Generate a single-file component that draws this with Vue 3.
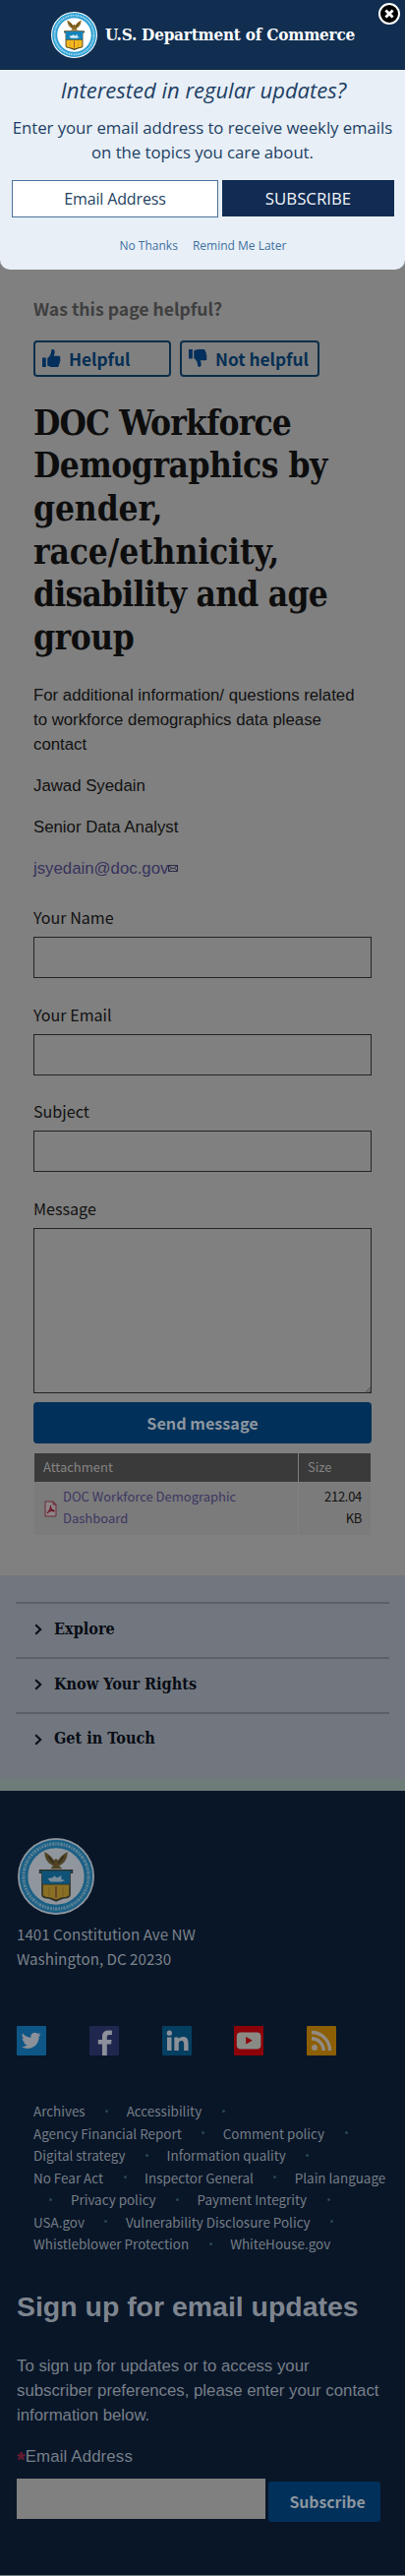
<script setup>
const headingLines = [
  { text: 'DOC Workforce', fit: 'fit-a' },
  { text: 'Demographics by', fit: 'fit-b' },
  { text: 'gender,', fit: 'fit-c' },
  { text: 'race/ethnicity,', fit: 'fit-c' },
  { text: 'disability and age', fit: 'fit-d' },
  { text: 'group', fit: 'fit-b' },
]
const fields = ['Your Name', 'Your Email', 'Subject']
const sections = ['Explore', 'Know Your Rights', 'Get in Touch']
const linkRows = [
  { items: ['Archives', 'Accessibility'], trail: true },
  { items: ['Agency Financial Report', 'Comment policy'], trail: true },
  { items: ['Digital strategy', 'Information quality'], trail: true },
  { items: ['No Fear Act', 'Inspector General', 'Plain language'] },
  { items: ['Privacy policy', 'Payment Integrity'], lead: true, trail: true },
  { items: ['USA.gov', 'Vulnerability Disclosure Policy'], trail: true },
  { items: ['Whistleblower Protection', 'WhiteHouse.gov'] },
]
const thumb = 'M0 9h4v10H0z M5.5 9.5 C8 8 9.5 5 9.6 2 C9.7 .2 10.4 0 11.2 0 C13.2 0 13.8 2.2 13.2 4.2 L12.4 7 H17.4 C19.6 7 20 9.3 18.9 10.3 C19.8 11.2 19.7 12.6 18.6 13.3 C19.2 14.4 18.8 15.5 17.9 16 C18.2 17.7 17.4 19 15.4 19 H11 C8.5 19 7.3 18 5.5 17.6 Z'
</script>

<template>
  <div class="page">
    <svg class="defs" width="0" height="0" aria-hidden="true">
      <symbol id="seal" viewBox="0 0 100 100">
        <circle cx="50" cy="50" r="50" fill="#fff" />
        <circle cx="50" cy="50" r="42.2" fill="none" stroke="#2b9ed2" stroke-width="11" />
        <circle cx="50" cy="50" r="42.4" fill="none" stroke="#a5dbf0" stroke-width="4" stroke-dasharray="3 1.2 1.6 1.2 2.4 1.4" />
        <path d="M35 18 C41 21 45 25 47 29 L50 27 L53 29 C55 25 59 21 65 18 C65 28 60 34 54 36 L58 40 H43 L46 36 C40 33 35 28 35 18Z" fill="#8a6a24" />
        <path d="M40 24 L47 33 M60 24 L53 33" stroke="#4a3612" stroke-width="1.6" />
        <path d="M28 41H72V46H69V73C69 78 64 79 60 79L50 83L40 79C36 79 31 78 31 73V46H28Z" fill="#4d4520" />
        <path d="M30 42.5H70V45.5H68V60H32V45.5H30Z" fill="#1583b9" />
        <path d="M33 61H67V73C67 76 63 77 59 77L50 80L41 77C37 77 33 76 33 73Z" fill="#f2b91f" />
        <path d="M39 53C43 51 46 53 48 49L51 52L57 49V54L62 55L57 57H43Z" fill="#d6eef7" />
        <path d="M49 63H51V78H49Z" fill="#a4572a" />
        <path d="M41 64V76M59 64V76" stroke="#c98a1c" stroke-width="1" />
      </symbol>
    </svg>

    <header class="brand">
      <svg class="brand-seal"><use href="#seal" /></svg>
      <span class="brand-name">U.S. Department of Commerce</span>
      <svg class="close" viewBox="0 0 24 24">
        <circle cx="12" cy="12" r="10" fill="#000" stroke="#fff" stroke-width="2" />
        <path d="M8.4 8.4L15.6 15.6M15.6 8.4L8.4 15.6" stroke="#fff" stroke-width="2.8" />
      </svg>
    </header>

    <section class="modal-wrap">
      <div class="modal">
        <h2 class="modal-title">Interested in regular updates?</h2>
        <p class="modal-copy">Enter your email address to receive weekly emails<br>on the topics you care about.</p>
        <div class="modal-form">
          <div class="modal-input">Email Address</div>
          <button class="modal-submit">SUBSCRIBE</button>
        </div>
        <div class="modal-links"><a>No Thanks</a><a>Remind Me Later</a></div>
      </div>
    </section>

    <main class="main">
      <div class="question">Was this page helpful?</div>
      <div class="votes">
        <button class="vote up">
          <svg class="thumb" viewBox="0 0 20 19"><path :d="thumb" /></svg>Helpful
        </button>
        <button class="vote down">
          <svg class="thumb flip" viewBox="0 0 20 19"><path :d="thumb" /></svg>Not helpful
        </button>
      </div>

      <h1 class="title">
        <span v-for="line in headingLines" :key="line.text" :class="line.fit">{{ line.text }}</span>
      </h1>

      <div class="copy">
        <p>For additional information/ questions related<br>to workforce demographics data please<br>contact</p>
        <p>Jawad Syedain</p>
        <p>Senior Data Analyst</p>
        <p><a class="mail">jsyedain@doc.gov<svg class="envelope" viewBox="0 0 10 7"><path d="M.5 .5H9.5V6.5H.5Z M.5 .5L5 4L9.5 .5 M.5 6.5L3.5 3 M9.5 6.5L6.5 3" fill="none" stroke="#2e2b48" /></svg></a></p>
      </div>

      <div v-for="field in fields" :key="field" class="field">
        <label>{{ field }}</label>
        <div class="box"></div>
      </div>
      <div class="field last">
        <label>Message</label>
        <div class="box area">
          <svg class="grip" viewBox="0 0 6 6"><path d="M1 6L6 1M4 6L6 4" stroke="#444" fill="none" /></svg>
        </div>
      </div>
      <button class="send">Send message</button>

      <div class="files">
        <div class="th">Attachment</div>
        <div class="th">Size</div>
        <div class="td">
          <svg class="pdf" viewBox="0 0 13 17">
            <path d="M1 1H9L12 4V16H1Z" fill="#8d8486" stroke="#6d2a38" />
            <path d="M9 1V4H12" fill="none" stroke="#6d1a2b" />
            <path d="M3 13C6 10 7 8 6.5 5M6.5 7C7 9 8 10.500 10.500 11M4 11.500C6 10.500 8 10 10 10" fill="none" stroke="#6d1a2b" stroke-width="1.300" />
          </svg>
          <a>DOC Workforce Demographic<br>Dashboard</a>
        </div>
        <div class="td size">212.04<br>KB</div>
      </div>
    </main>

    <nav class="more">
      <div v-for="s in sections" :key="s" class="more-item">
        <svg class="chev" viewBox="0 0 8 12"><path d="M1.200 1.200L6.200 6L1.200 10.800" fill="none" stroke="#080c14" stroke-width="2" /></svg>{{ s }}
      </div>
    </nav>
    <div class="strip"></div>

    <footer class="footer">
      <svg class="footer-seal"><use href="#seal" /></svg>
      <address>1401 Constitution Ave NW<br>Washington, DC 20230</address>

      <div class="social">
        <svg viewBox="0 0 30 30"><rect width="30" height="30" rx="1" fill="#0e5685" /><path d="M24.600 8.600C23.800 9 23.100 9.200 22.300 9.300C23.100 8.800 23.700 8 24 7.100C23.200 7.600 22.300 7.900 21.400 8.100A4.050 4.050 0 0 0 14.500 11.800C11.100 11.600 8.100 10 6.100 7.500C5 9.400 5.600 11.800 7.400 12.900C6.700 12.900 6.100 12.700 5.600 12.400C5.600 14.400 7 16.100 8.800 16.400C8.200 16.600 7.600 16.600 7 16.500C7.500 18.100 9 19.300 10.800 19.300C9.100 20.600 7 21.300 4.800 21C12.600 26 22.600 20.800 22.600 11.300V10.700C23.400 10.100 24.100 9.400 24.600 8.600Z" fill="#8c9098" /></svg>
        <svg viewBox="0 0 30 30"><rect width="30" height="30" rx="1" fill="#20274f" /><path d="M13 30V18.500H8.800V14H13V10.800C13 6.600 15.500 4.600 19.300 4.600C21 4.600 22.300 4.700 22.900 4.800V9H20.300C18.200 9 17.800 10 17.800 11.500V14H22.600L22 18.500H17.800V30Z" fill="#8c909a" /></svg>
        <svg viewBox="0 0 30 30"><rect width="30" height="30" rx="1" fill="#043f61" /><circle cx="7.300" cy="7.200" r="2.600" fill="#8c9098" /><path d="M5 11.500H9.500V25H5ZM12.300 11.500H16.500V13.400C17.300 12 18.900 11.100 21 11.100C25.200 11.100 26.600 13.800 26.600 17.700V25H22.100V18.400C22.100 16.500 21.700 15 19.600 15C17.400 15 16.800 16.500 16.800 18.400V25H12.300Z" fill="#8c9098" /></svg>
        <svg viewBox="0 0 30 30"><rect width="30" height="30" rx="1" fill="#8c0209" /><rect x="2.800" y="6.500" width="24.600" height="17" rx="4" fill="#8a8a85" /><path d="M12.200 11V18.500L18.800 14.700Z" fill="#8c0209" /></svg>
        <svg viewBox="0 0 30 30"><rect width="30" height="30" rx="1" fill="#8c5f06" /><circle cx="8" cy="22" r="2.900" fill="#918b83" /><path d="M5 12.800A12.200 12.200 0 0 1 17.200 25M5 6.500A18.500 18.500 0 0 1 23.500 25" fill="none" stroke="#918b83" stroke-width="3.400" /></svg>
      </div>

      <div class="links">
        <div v-for="(row, i) in linkRows" :key="i" class="link-row" :class="{ lead: row.lead }">
          <i v-if="row.lead" class="dot"></i>
          <template v-for="(item, j) in row.items" :key="item">
            <i v-if="j" class="dot"></i>
            <a>{{ item }}</a>
          </template>
          <i v-if="row.trail" class="dot"></i>
        </div>
      </div>

      <h3 class="signup-title">Sign up for email updates</h3>
      <p class="signup-copy">To sign up for updates or to access your<br>subscriber preferences, please enter your contact<br>information below.</p>
      <div class="signup-label"><b>*</b>Email Address</div>
      <div class="signup-form">
        <div class="signup-input"></div>
        <button class="signup-submit">Subscribe</button>
      </div>
    </footer>
    <div class="edge"></div>
  </div>
</template>

<style scoped>
.page {
  --sans: "Noto Sans CJK SC", sans-serif;
  --arial: "Liberation Sans", Arial, sans-serif;
  --open: "Open Sans", "Noto Sans", sans-serif;
  --serif: "DejaVu Serif Condensed", "DejaVu Serif", serif;
  width: 412px;
  height: 2618px;
  overflow: hidden;
  background: #808080;
  color: #111;
  font-family: var(--sans);
}
.page * { box-sizing: border-box; }
h1, h2, h3, p { margin: 0; font-weight: 400; }
svg { display: block; flex: none; }
button { border: 0; padding: 0; margin: 0; white-space: nowrap; }
.defs { position: absolute; }

.brand {
  position: relative;
  height: 71px;
  background: #112e51;
  border-bottom: 1px solid #0d2440;
  display: flex;
  align-items: center;
  padding-left: 51.500px;
  gap: 8.500px;
}
.brand-seal { width: 47px; height: 47px; }
.brand-name {
  color: #fff;
  font: 700 17px/24px var(--serif);
  letter-spacing: -.22px;
  white-space: nowrap;
}
.close { position: absolute; width: 24px; height: 24px; left: 384px; top: 2px; }

.modal-wrap { height: 203px; background: #808080; }
.modal {
  height: 203px;
  background: #e8eff7;
  border-radius: 0 0 10px 10px;
  color: #1d3f63;
  font-family: var(--open);
  padding: 5px 11px 0 12px;
  text-align: center;
}
.modal-title { font-size: 22px; line-height: 30px; font-style: italic; margin-left: 1px; white-space: nowrap; }
.modal-copy { font-size: 16.800px; line-height: 25.200px; letter-spacing: -.05px; margin-top: 11px; margin-left: -1px; white-space: nowrap; }
.modal-form { display: flex; gap: 4px; margin-top: 15.600px; }
.modal-input {
  width: 210px; height: 38px;
  border: 1px solid #4a7198;
  background: #fff;
  font-size: 16px; line-height: 37px; letter-spacing: -.15px;
  color: #24425f;
}
.modal-submit {
  width: 175px; height: 37px;
  background: #112b52;
  color: #f2f5f9;
  font: 400 16.800px/37px var(--open);
}
.modal-links { display: flex; justify-content: center; gap: 15px; margin-top: 20px; font-size: 12px; line-height: 17px; color: #40709f; }

.main { height: 1327px; padding: 28px 34px 0; }
.question { font-size: 17.600px; line-height: 24px; font-weight: 700; color: #3f3f3f; }
.votes { display: flex; gap: 9px; margin-top: 20px; }
.vote {
  height: 37px;
  border: 2px solid #0b2e4a;
  border-radius: 4px;
  background: transparent;
  color: #062f54;
  font: 700 17.300px/32px var(--sans);
  display: flex;
  align-items: center;
  gap: 8px;
  padding-left: 7px;
}
.vote .thumb { margin-top: -2px; }
.up { width: 140px; }
.down { width: 142px; }
.thumb { width: 19px; height: 18px; fill: #042f5c; }
.flip { transform: scaleY(-1); }

.title { margin-top: 24.500px; font: 700 35px/43.700px var(--serif); color: #0d0d0d; }
.title span { display: block; white-space: nowrap; }
.fit-a { letter-spacing: -.85px; }
.fit-b { letter-spacing: -.45px; }
.fit-c { letter-spacing: -.1px; }
.fit-d { letter-spacing: -.75px; }

.copy { margin-top: 24.200px; font: 400 16.800px/25.200px var(--arial); }
.copy p + p { margin-top: 16.800px; }
.copy p { white-space: nowrap; }
.mail { color: #37335c; }
.envelope { display: inline-block; width: 10px; height: 7px; margin-left: 0; vertical-align: 2px; }

.field { height: 98.600px; }
.copy + .field { margin-top: 24.500px; }
.field label { display: block; font-size: 16.100px; line-height: 24px; }
.box { height: 42px; margin-top: 8px; border: 1px solid #242424; }
.field.last { height: 200px; }
.area { height: 168px; display: flex; align-items: flex-end; justify-content: flex-end; }
.grip { width: 6px; height: 6px; }
.send {
  display: block;
  width: 344px; height: 42px;
  margin-top: 9px;
  border-radius: 4px;
  background: #01305a;
  color: #8d969f;
  font: 700 16.200px/40px var(--sans);
}
.files {
  display: grid;
  grid-template-columns: 268px 73px;
  grid-template-rows: 29px 53px;
  gap: 1px;
  margin: 10.500px 1px 0;
  font-size: 13px;
}
.th { background: #3a3a3a; color: #858585; line-height: 28px; padding-left: 9px; }
.td { background: #7b7b7b; line-height: 22px; padding: 3px 9px 0; display: flex; }
.td a { color: #3b3762; margin-left: 6px; white-space: nowrap; }
.pdf { width: 13px; height: 17px; margin: 15px 0 0 1px; }
.size { display: block; text-align: right; letter-spacing: -.3px; }

.more { height: 207px; background: #72777f; padding: 27px 16px 0; }
.more-item {
  height: 55.800px;
  border-top: 2px solid #5b6069;
  display: flex;
  align-items: center;
  gap: 12px;
  padding: 0 0 2px 19px;
  font: 700 16.100px/24px var(--serif);
  color: #080c14;
}
.chev { width: 8px; height: 12px; margin-top: 1px; }
.strip { height: 12px; background: #6e7c79; }

.footer { height: 797px; background: #091628; padding: 48px 17px 0; color: #777f88; }
.footer-seal { width: 78px; height: 78px; margin-left: 1px; opacity: .55; }
address { font: 400 15.200px/25px var(--sans); margin-top: 6.500px; color: #7b828a; }
.social { display: flex; gap: 43.800px; margin-top: 56.500px; }
.social svg { width: 30px; height: 30px; }
.links { margin: 45px 0 0 17px; font-size: 13.450px; line-height: 22.500px; color: #757d86; }
.link-row { display: flex; align-items: center; white-space: nowrap; }
.dot { width: 3px; height: 3px; border-radius: 50%; background: #29474f; margin: 0 18.500px 0 20.500px; flex: none; }
.lead .dot:first-child { margin-left: 16px; margin-right: 19px; }

.signup-title { margin-top: 33px; font: 700 28.450px/38px var(--arial); color: #7e858f; white-space: nowrap; }
.signup-copy { margin-top: 29px; font: 400 16.800px/25.400px var(--arial); white-space: nowrap; }
.signup-label { margin-top: 16.500px; font: 400 16.800px/25px var(--arial); letter-spacing: .15px; }
.signup-label b { color: #6a1a33; font-weight: 700; font-size: 22px; line-height: 10px; vertical-align: -5px; }
.signup-form { display: flex; gap: 3px; margin-top: 10px; }
.signup-input { width: 253px; height: 41px; background: #808080; }
.signup-submit {
  width: 114px; height: 41px; margin-top: 3px;
  border-radius: 3px;
  background: #01305a;
  color: #8d969f;
  font: 700 15.800px/38px var(--sans);
  padding-left: 6px;
}
.edge { height: 1px; background: #6f7d80; }
</style>

<style>
body { margin: 0; background: #808080; }
</style>
